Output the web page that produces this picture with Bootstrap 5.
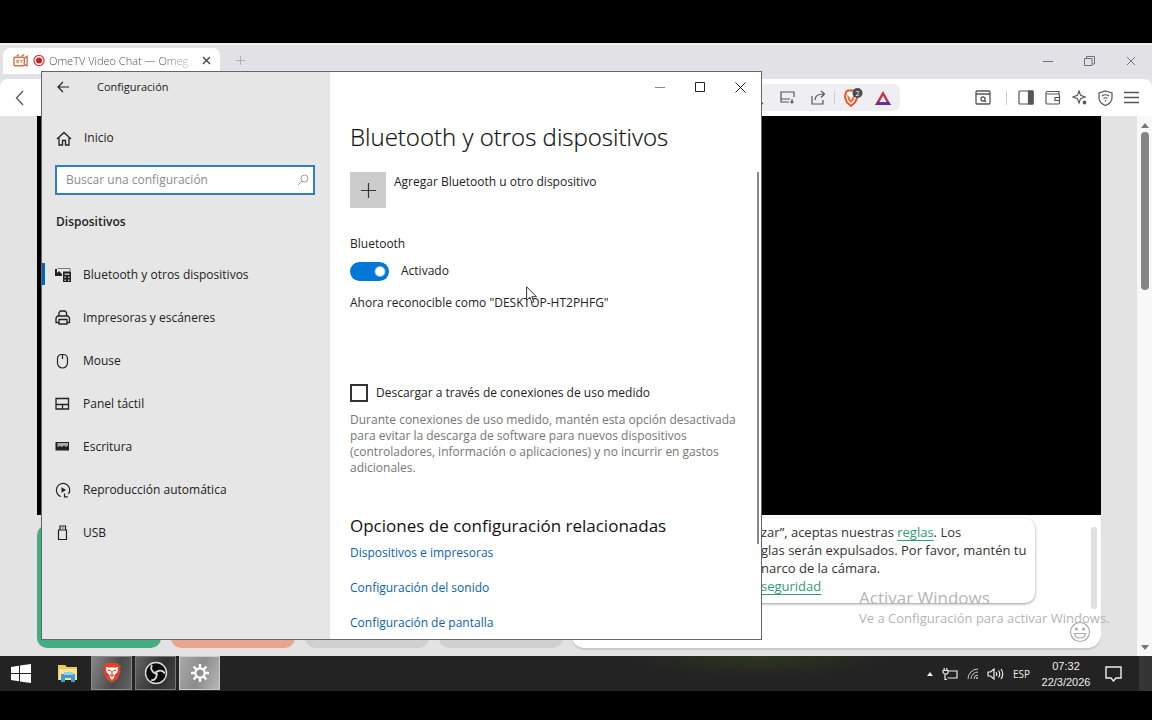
<!DOCTYPE html>
<html lang="es">
<head>
<meta charset="utf-8">
<meta name="viewport" content="width=device-width, initial-scale=1">
<title>Configuración</title>
<link href="https://cdn.jsdelivr.net/npm/bootstrap@5.3.0/dist/css/bootstrap.min.css" rel="stylesheet">
<style>
body{font-family:"Open Sans","Noto Sans",sans-serif;font-size:12px;line-height:16px;color:#222;background:#000;padding:43px 0 29px}
svg{display:block;flex:none}
.bare{border:0;background:none;padding:0;color:inherit;display:flex;align-items:center;justify-content:center}
.ln{fill:none;stroke:currentColor}

/* browser */
.browser{background:#e3e3e3}
.tabstrip{height:36px;background:#e1e1e6;border-top:2px solid #f0f0f2;padding:0 0 3px 3px}
.tab-item{width:217px;height:26px;background:#fff;border-radius:7px 7px 0 0;padding:0 9px 0 10px;color:#777;font-size:11px;font-weight:300}
.tab-title{white-space:nowrap;background:linear-gradient(90deg,#444 80%,#bbb);-webkit-background-clip:text;background-clip:text;color:transparent}
.toolbar{height:37px;background:#fff;border-radius:8px 8px 0 0;padding:0 13px 0 14px;color:#555}
.addr{height:27px;background:#efeff3;border-radius:6px;width:188px;padding:0 9px;color:#555;gap:8px}
.tools{gap:11px;margin-left:75px}
.vr-thin{width:1px;height:14px;background:#ccc}
.page{margin:0 36px 8px 37px}
.videos{height:399px;background:#000}
.act{flex:0 1 124px;border:0;border-radius:10px}
.act-row{width:534px;gap:10px;padding-top:10px}
.chat{background:#fff;border-radius:0 0 14px 14px;box-shadow:0 2px 1px #c9c9c9;padding-right:4px}
.bubble{width:464px;margin-top:3px;height:85px;padding:5px 14px 0 190px;border-radius:10px;box-shadow:0 1px 3px #999;font-size:13px;line-height:18px;color:#333;white-space:nowrap;text-align:left}
.bubble a{color:#2f9b71;text-underline-offset:3px}
.chatbar{width:6px;height:82px;margin-top:12px;background:#e0e0e0;border-radius:3px}
.chatinput{border:0;background:none;outline:0;height:24px}
.pagebar{width:15px;background:#f8f8f8;padding:7px 0 6px;color:#777}
.thumb{width:8px;height:158px;margin-top:4px;background:#858585;border-radius:4px}
.watermark{right:43px;bottom:29px;color:#b5b5b5;width:250px;white-space:nowrap;pointer-events:none}
.watermark .big{font-size:17px;line-height:22px}
.watermark .sub{font-size:13px;line-height:18px}

/* settings window */
.win{left:41px;top:28px;width:721px;border:1px solid #666;background:#fff}
.side{width:288px;background:#e6e6e6}
.titlebar{height:30px}
.home{height:36px;margin-top:18px;padding-left:14px;gap:12px}
.search{margin:9px 15px 0 13px;height:30px;border:2px solid #2f7fc3;background:#fff}
.search input{border:0;outline:0;width:100%;padding:0 9px;background:none;min-width:0}
.search input::placeholder{color:#8c8c8c;opacity:1}
.group{font-weight:600;margin:19px 0 23px 14px}
.nav-row{height:43px;padding-left:13px;gap:11px;color:#222;text-decoration:none;position:relative}
.nav-row.active::before{content:"";position:absolute;left:0;top:10px;width:3px;height:22px;background:#0067b8}
.main{padding:0 2px 0 20px}
.main h1{font-size:24px;font-weight:300;line-height:36px;margin:17px 0;color:#111;-webkit-text-stroke:.2px #111}
.main h2{font-size:17px;line-height:24px;font-weight:400;margin:38px 0 7px;color:#111}
.plus{width:36px;height:36px;background:#ccc;color:#333}
.add-text{padding-top:2px}
.bt-label{margin-top:28px}
.bt-row{margin-top:7px;gap:12px}
.bt-name{margin-top:12px}
.met-row{margin-top:70px}
.form-check .sw{width:39px;height:19px;margin:0;float:none;background-color:#0078d7;border:0;border-radius:10px;background-size:auto;background-image:radial-gradient(circle at 30px 50%,#fff 4px,rgba(255,255,255,0) 6px)!important;box-shadow:none}
.form-check .box{width:18px;height:18px;margin:0;border:2px solid #333;border-radius:0;float:none}
.note{color:#767676;max-width:390px;margin:7px 0 0}
.rel a{color:#0a64ad;text-decoration:none;display:block;margin-bottom:19px}
.winbar{width:2px;height:372px;margin-top:70px;background:#8a8a8a}
.caps{gap:30px;padding-right:13px}
.pointer{left:526px;top:243px}

/* taskbar */
.taskbar{height:35px;background:#232323 radial-gradient(ellipse 130px 22px at 66% 0,#2c3620,rgba(44,54,32,0)) no-repeat;color:#eee}
.tk{width:41px;height:34px;border:0;padding:0;margin-right:3px;display:flex;align-items:center;justify-content:center}
.tk.run{background:linear-gradient(110deg,#8a8a8a,#4a4a4a 60%,#666);box-shadow:inset 0 0 0 1px #888}
.tk.obs{background:linear-gradient(110deg,#666,#303030 60%,#444);box-shadow:inset 0 0 0 1px #777}
.tk.on{background:linear-gradient(110deg,#aaa,#8c8c8c 50%,#b8b8b8);box-shadow:inset 0 0 0 1px #ccc}
.tray{gap:9px}
.clock{font:11px/16px "Liberation Sans",Arial,sans-serif;text-align:center;width:50px;margin:0 5px 0 2px}
.peek{width:13px;background:#353535;border:0;margin-left:17px}
</style>
</head>
<body class="min-vh-100 d-flex flex-column overflow-hidden">

<div class="flex-grow-1 position-relative d-flex flex-column">
  <div class="browser flex-grow-1 d-flex flex-column">
    <div class="tabstrip d-flex align-items-center">
      <div class="tab-item d-flex align-items-center">
        <svg width="16" height="15" viewBox="0 0 17 15" class="me-1"><g fill="none" stroke="#cf7450" stroke-width="1.5"><rect x="1" y="4" width="11" height="9" rx="1"/><path d="M12 5l3-2v10l-3-1M4 3l2-2M9 3l3-2" /></g><path d="M4 7h2v3H4zM8 7l1 3 1-3" fill="#dda26a" stroke="#dda26a"/></svg>
        <svg width="12" height="13" viewBox="0 0 13 13" class="me-1"><circle cx="6.500" cy="6.500" r="5.500" fill="none" stroke="#d33" stroke-width="1.300"/><circle cx="6.500" cy="6.500" r="3.300" fill="#cb1f27"/></svg>
        <span class="tab-title">OmeTV Video Chat — Omeg</span>
        <button class="bare ms-auto" aria-label="Cerrar pestaña"><svg width="9" height="9" viewBox="0 0 9 9" stroke="#444" stroke-width="1.400"><path d="M1 1l7 7M8 1L1 8"/></svg></button>
      </div>
      <button class="bare ms-3" aria-label="Nueva pestaña"><svg width="9" height="9" viewBox="0 0 10 10" stroke="#aaa"><path d="M5 0v10M0 5h10"/></svg></button>
      <div class="d-flex ms-auto align-items-center pe-3 text-secondary" style="gap:31px">
        <button class="bare" aria-label="Minimizar"><svg width="10" height="10" viewBox="0 0 10 10" class="ln"><path d="M0 5.500h10"/></svg></button>
        <button class="bare" aria-label="Restaurar"><svg width="11" height="10" viewBox="0 0 11 10" class="ln"><path d="M.5 2.500h7.500v7H.5zM2.500 2V.5h8V8H8.500"/></svg></button>
        <button class="bare" aria-label="Cerrar"><svg width="10" height="10" viewBox="0 0 10 10" class="ln"><path d="M1 1l8 8M9 1L1 9"/></svg></button>
      </div>
    </div>
    <div class="toolbar d-flex align-items-center">
      <button class="bare" aria-label="Atrás"><svg width="12" height="16" viewBox="0 0 12 16" class="ln" stroke-width="1.300"><path d="M9 1L2.500 8 9 15"/></svg></button>
      <div class="addr d-flex align-items-center justify-content-end ms-auto">
        <button class="bare me-2" aria-label="Zoom"><svg width="15" height="15" viewBox="0 0 15 15" class="ln" stroke-width="1.300"><circle cx="6" cy="6" r="4.500"/><path d="M9.500 9.500L14 14"/></svg></button>
        <button class="bare me-2" aria-label="Instalar"><svg width="15" height="13" viewBox="0 0 15 13" class="ln" stroke-width="1.200"><path d="M14 6V1H1v10h8M1 8h9M12 8v4M10.500 10.500L12 12l1.500-1.500"/></svg></button>
        <button class="bare" aria-label="Compartir"><svg width="15" height="15" viewBox="0 0 15 15" class="ln" stroke-width="1.200"><path d="M1 6v8h11v-4M4 10c0-4 3-6 9-6M10 1l3.500 3L10 7.500"/></svg></button>
        <span class="vr-thin"></span>
        <button class="bare" aria-label="Escudos de Brave"><svg width="20" height="20" viewBox="0 0 20 20"><path d="M3 4l2-1.500h5L14 5v5l-2 4.500L8 18l-4-3.500L2 9z" fill="#fff" stroke="#ed5425" stroke-width="2"/><path d="M4 7l2 1 2 4 2-4 2-1-1 5-3 3-3-3z" fill="#f0744a"/><circle cx="14.500" cy="5" r="5" fill="#4a4b50"/><text x="14.500" y="8" font-size="7" fill="#fff" text-anchor="middle">2</text></svg></button>
        <button class="bare ms-1" aria-label="Recompensas"><svg width="16" height="14" viewBox="0 0 16 14"><path d="M8 0l8 14H0z" fill="#cf2f45"/><path d="M0 14l3-4h10l3 4z" fill="#67309b"/><path d="M8 5l3.500 6h-7z" fill="#fff"/></svg></button>
      </div>
      <div class="tools d-flex align-items-center">
        <button class="bare me-1" aria-label="Buscar en la página"><svg width="16" height="15" viewBox="0 0 16 15" class="ln" stroke-width="1.300"><rect x="1" y="1" width="14" height="13" rx="1"/><path d="M1 4h14M9.500 10.500L11 12"/><circle cx="8" cy="9" r="2"/></svg></button>
        <span class="vr-thin"></span>
        <button class="bare" aria-label="Panel lateral"><svg width="16" height="15" viewBox="0 0 16 15" class="ln" stroke-width="1.200"><rect x="1" y="1" width="14" height="13" rx="1"/><path d="M10.500 1H15v13h-4.500z" fill="currentColor"/></svg></button>
        <button class="bare" aria-label="Cartera"><svg width="16" height="15" viewBox="0 0 16 15" class="ln" stroke-width="1.200"><path d="M14 4V1.500H2.500A1.500 1.500 0 0 0 1 3v9.500A1.500 1.500 0 0 0 2.500 14H13a1.500 1.500 0 0 0 1.500-1.500v-7A1.500 1.500 0 0 0 13 4H2M15 7.500H10v3h5"/></svg></button>
        <button class="bare" aria-label="Leo"><svg width="15" height="15" viewBox="0 0 15 15" class="ln" stroke-width="1.200"><path d="M7 1l1.600 4.400L13 7l-4.400 1.600L7 13 5.400 8.600 1 7l4.400-1.600z"/><circle cx="12.500" cy="12.500" r="1.300" fill="currentColor"/></svg></button>
        <button class="bare" aria-label="VPN"><svg width="15" height="16" viewBox="0 0 15 16" class="ln" stroke-width="1.200"><path d="M7.500 1L14 3v5c0 4-3 6-6.500 7.500C4 14 1 12 1 8V3zM4 6q3.500-2.500 7 0M5.500 8.500q2-1.500 4 0M7.500 10v1.500"/></svg></button>
        <button class="bare" aria-label="Menú"><svg width="15" height="13" viewBox="0 0 15 13" class="ln" stroke-width="1.300"><path d="M0 1.500h15M0 6.500h15M0 11.500h15"/></svg></button>
      </div>
    </div>
    <div class="flex-grow-1 d-flex">
      <div class="page flex-grow-1 d-flex flex-column">
        <div class="videos"></div>
        <div class="flex-grow-1 d-flex">
          <div class="act-row d-flex align-items-stretch flex-shrink-0">
            <button class="act" style="background:#43ac82" aria-label="Iniciar"></button>
            <button class="act" style="background:#e9a592" aria-label="Detener"></button>
            <button class="act" style="background:#d0d0d0" aria-label="País"></button>
            <button class="act" style="background:#d0d0d0" aria-label="Género"></button>
          </div>
          <div class="chat flex-grow-1 d-flex flex-column">
            <div class="d-flex justify-content-between">
              <div class="bubble">zar”, aceptas nuestras <a href="#">reglas</a>. Los<br>glas serán expulsados. Por favor, mantén tu<br>narco de la cámara.<br><a href="#">seguridad</a></div>
              <div class="chatbar"></div>
            </div>
            <div class="d-flex align-items-center mt-auto mb-1 pe-1">
              <input class="chatinput flex-grow-1" type="text" aria-label="Mensaje">
              <button class="bare" aria-label="Emoji"><svg width="24" height="22" viewBox="0 0 24 22" class="ln" stroke-width="1.200" style="color:#aaa"><circle cx="11" cy="11" r="9.500"/><path d="M5.500 12.500h11c-.5 6-10.500 6-11 0z"/><circle cx="7.500" cy="8" r="1" fill="#aaa"/><circle cx="14.500" cy="8" r="1" fill="#aaa"/></svg></button>
            </div>
          </div>
        </div>
      </div>
      <div class="pagebar d-flex flex-column align-items-center">
        <svg width="8" height="5" viewBox="0 0 8 5"><path d="M0 5l4-5 4 5z" fill="currentColor"/></svg>
        <div class="thumb"></div>
        <svg width="8" height="5" viewBox="0 0 8 5" class="mt-auto"><path d="M0 0h8L4 5z" fill="currentColor"/></svg>
      </div>
    </div>
  </div>

  <div class="watermark position-absolute">
    <div class="big">Activar Windows</div>
    <div class="sub">Ve a Configuración para activar Windows.</div>
  </div>

  <section class="win position-absolute d-flex" aria-label="Configuración">
    <div class="side flex-shrink-0">
      <div class="titlebar d-flex align-items-center" style="padding-left:15px;gap:28px">
        <button class="bare" aria-label="Atrás"><svg width="12" height="12" viewBox="0 0 12 12" class="ln" stroke-width="1.200"><path d="M12 6H1M6 1L1 6l5 5"/></svg></button>
        <span style="font-size:11px">Configuración</span>
      </div>
      <a href="#" class="home d-flex align-items-center text-reset text-decoration-none">
        <svg width="16" height="15" viewBox="0 0 16 15" class="ln" stroke-width="1.300"><path d="M1 8l7-6.500L15 8M3 7v7h3.500V9.500h3V14H13V7"/></svg>Inicio</a>
      <div class="search d-flex align-items-center">
        <input type="text" placeholder="Buscar una configuración" aria-label="Buscar una configuración">
        <svg width="12" height="12" viewBox="0 0 12 12" class="ln me-1" style="color:#999"><circle cx="7.500" cy="4.500" r="3.500"/><path d="M5 7L1 11"/></svg>
      </div>
      <div class="group">Dispositivos</div>
      <nav>
        <a href="#" class="nav-row active d-flex align-items-center"><svg width="17" height="16" viewBox="0 0 17 16"><path d="M2.500 1.500H15V4" fill="none" stroke="#777"/><path d="M0 2h2v4l2-2 3 3v2H0z" fill="#222"/><path d="M8 4.500h8V15H8z" fill="#222"/><path d="M9.500 6.500h5v1.500h-5zM9.500 9.500h1.500v1.500H9.500zM13 9.500h1.500v1.500H13zM9.500 12.500h1.500V14H9.500zM13 12.500h1.500V14H13z" fill="#bbb"/></svg>Bluetooth y otros dispositivos</a>
        <a href="#" class="nav-row d-flex align-items-center"><svg width="17" height="16" viewBox="0 0 17 16" class="ln" stroke-width="1.300"><path d="M4 6V2.500L5.500 1H10l1.500 1.500V6M4 12.500H1V8l1.500-2h10.500L14.500 8v4.500H12M4 9.500h8V14H4z"/></svg>Impresoras y escáneres</a>
        <a href="#" class="nav-row d-flex align-items-center"><svg width="17" height="16" viewBox="0 0 17 16" class="ln" stroke-width="1.200"><path d="M2.500 5.500a4 4 0 0 1 4-4h2a4 4 0 0 1 4 4V10a5 5 0 0 1-10 0zM7.500 1.500V6"/></svg>Mouse</a>
        <a href="#" class="nav-row d-flex align-items-center"><svg width="17" height="16" viewBox="0 0 17 16" class="ln" stroke-width="1.300"><path d="M1 2.500h12.500v10.500H1zM1 8.500h12.500M7.500 8.500V13"/></svg>Panel táctil</a>
        <a href="#" class="nav-row d-flex align-items-center"><svg width="17" height="16" viewBox="0 0 17 16"><path d="M.5 3h13.500v8.500H.5z" fill="#222"/><path d="M2.500 4h10.500v2.500L11 8 9 6.500 7 8 5 7 2.500 8z" fill="#aaa"/></svg>Escritura</a>
        <a href="#" class="nav-row d-flex align-items-center"><svg width="17" height="16" viewBox="0 0 17 16" class="ln" stroke-width="1.200"><path d="M6 14.500A6.700 6.700 0 1 1 13.500 12M9.500 11.500v3.300h3.300"/><path d="M6.500 5.200v5.600L11 8z" fill="currentColor" stroke="none"/></svg>Reproducción automática</a>
        <a href="#" class="nav-row d-flex align-items-center"><svg width="17" height="16" viewBox="0 0 17 16" class="ln" stroke-width="1.200"><path d="M3.500 5h8v9.500h-8zM5 5V1h5.500v4M7 3h1.500"/></svg>USB</a>
      </nav>
    </div>
    <div class="main flex-grow-1 d-flex">
      <div class="flex-grow-1">
        <div class="titlebar"></div>
        <h1>Bluetooth y otros dispositivos</h1>
        <div class="d-flex gap-2">
          <button class="bare plus" aria-labelledby="addl"><svg width="15" height="15" viewBox="0 0 15 15" class="ln" stroke-width="1.200"><path d="M7.500 0v15M0 7.500h15"/></svg></button>
          <span id="addl" class="add-text">Agregar Bluetooth u otro dispositivo</span>
        </div>
        <div class="bt-label">Bluetooth</div>
        <div class="form-check bt-row d-flex align-items-center p-0 mb-0">
          <input class="form-check-input sw" type="checkbox" role="switch" id="bt" checked>
          <label for="bt">Activado</label>
        </div>
        <div class="bt-name">Ahora reconocible como "DESKTOP-HT2PHFG"</div>
        <div class="form-check met-row d-flex align-items-center p-0 mb-0 gap-2">
          <input class="form-check-input box" type="checkbox" id="met">
          <label for="met">Descargar a través de conexiones de uso medido</label>
        </div>
        <p class="note">Durante conexiones de uso medido, mantén esta opción desactivada para evitar la descarga de software para nuevos dispositivos (controladores, información o aplicaciones) y no incurrir en gastos adicionales.</p>
        <h2>Opciones de configuración relacionadas</h2>
        <div class="rel">
          <a href="#">Dispositivos e impresoras</a>
          <a href="#">Configuración del sonido</a>
          <a href="#" class="mb-2">Configuración de pantalla</a>
        </div>
      </div>
      <div class="d-flex flex-column align-items-end flex-shrink-0" style="width:2px">
        <div class="titlebar d-flex align-items-center caps">
          <button class="bare" aria-label="Minimizar"><svg width="10" height="10" viewBox="0 0 10 10" class="ln" style="color:#888"><path d="M0 5.500h10"/></svg></button>
          <button class="bare" aria-label="Maximizar"><svg width="10" height="10" viewBox="0 0 10 10" class="ln"><path d="M.5.5h9v9h-9z"/></svg></button>
          <button class="bare" aria-label="Cerrar"><svg width="11" height="11" viewBox="0 0 11 11" class="ln"><path d="M.5.5l10 10M10.500.5l-10 10"/></svg></button>
        </div>
        <div class="winbar"></div>
      </div>
    </div>
  </section>

  <svg class="pointer position-absolute" width="12" height="18" viewBox="0 0 12 18"><path d="M.6.8v13.500l3.200-3 2.200 5.200 2-.8-2.200-5h4.600z" fill="#fff" stroke="#333"/></svg>
</div>

<div class="taskbar d-flex align-items-stretch">
  <button class="tk bg-transparent" style="margin-right:6px" aria-label="Inicio"><svg width="20" height="19" viewBox="0 0 20 19" fill="#fff"><path d="M0 3l8-1.200V9H0zM9 1.600L20 0v9H9zM0 10h8v7.200L0 16zM9 10h11v9L9 17.400z"/></svg></button>
  <button class="tk bg-transparent" aria-label="Explorador de archivos"><svg width="22" height="18" viewBox="0 0 22 18"><path d="M1 1h7l2 2h10v13H1z" fill="#efc75e"/><path d="M2 5h18v11H2z" fill="#fbe392"/><path d="M4 10h14v8h-4v-4H8v4H4z" fill="#3e9bd3"/><path d="M7 8h9v3H7z" fill="#8fd0ee"/></svg></button>
  <button class="tk run" aria-label="Brave"><svg width="20" height="22" viewBox="0 0 20 22"><path d="M5 1h10l2 2 2 1-1 3 .5 2-3 8L10 21l-5.500-4-3-8L2 7 1 4l2-1z" fill="#e8402a"/><path d="M4 5l3 .5h6L16 5l-.5 5-3 3-.5 3-2 2-2-2-.5-3-3-3z" fill="#fff"/><path d="M6 8l3 1M14 8l-3 1M10 9v4M8 13l2 1 2-1" stroke="#e8402a" fill="none" stroke-width="1.200"/></svg></button>
  <button class="tk obs" aria-label="OBS"><svg width="24" height="24" viewBox="0 0 24 24"><circle cx="12" cy="12" r="10.500" fill="#0a0a0a" stroke="#ddd" stroke-width="1.400"/><g fill="none" stroke="#ddd" stroke-width="1.700"><path d="M12 13C8 11 6 8 8 4"/><path d="M12 13C8 11 6 8 8 4" transform="rotate(120 12 12)"/><path d="M12 13C8 11 6 8 8 4" transform="rotate(240 12 12)"/></g></svg></button>
  <button class="tk on" aria-label="Configuración"><svg width="18" height="18" viewBox="0 0 18 18"><circle cx="9" cy="9" r="4.700" fill="none" stroke="#fff" stroke-width="2.200"/><g stroke="#fff" stroke-width="2.400"><path d="M9 0v4M9 14v4M0 9h4M14 9h4M2.600 2.600l2.900 2.900M12.500 12.500l2.900 2.900M15.400 2.600l-2.900 2.900M5.500 12.500l-2.900 2.900"/></g></svg></button>
  <div class="tray d-flex align-items-center ms-auto">
    <button class="bare" aria-label="Mostrar iconos ocultos"><svg width="6" height="4" viewBox="0 0 6 4"><path d="M0 4l3-4 3 4z" fill="#eee"/></svg></button>
    <svg width="16" height="12" viewBox="0 0 16 12" class="ln" stroke-width="1.200"><path d="M5.500 3H15v7H5.500M3 6v5.500h2M1 2.500h5v2c0 2-4 2-5 0zM2.200 0v2.500M4.800 0v2.500"/></svg>
    <svg width="11" height="11" viewBox="0 0 11 11" class="ln" style="color:#ccc"><path d="M1 11A10 10 0 0 1 11 1M4 11a7 7 0 0 1 7-7M7 11a4 4 0 0 1 4-4"/><circle cx="10" cy="10" r="1" fill="#ccc" stroke="none"/></svg>
    <svg width="17" height="12" viewBox="0 0 17 12" class="ln" stroke-width="1.200"><path d="M1 4h2.500L7 1v10L3.500 8H1zM9 4q1.500 2 0 4M11.500 2.500q2.500 3.500 0 7M14 1q3.500 5 0 10"/></svg>
    <span style="font-size:10px">ESP</span>
    <div class="clock">07:32<br>22/3/2026</div>
    <button class="bare" aria-label="Notificaciones"><svg width="17" height="16" viewBox="0 0 17 16" class="ln" stroke-width="1.400"><path d="M1 1h15v11h-5l-2.500 3L6 12H1z"/></svg></button>
  </div>
  <button class="peek" aria-label="Mostrar escritorio"></button>
</div>

<script src="https://cdn.jsdelivr.net/npm/bootstrap@5.3.0/dist/js/bootstrap.bundle.min.js"></script>
</body>
</html>
